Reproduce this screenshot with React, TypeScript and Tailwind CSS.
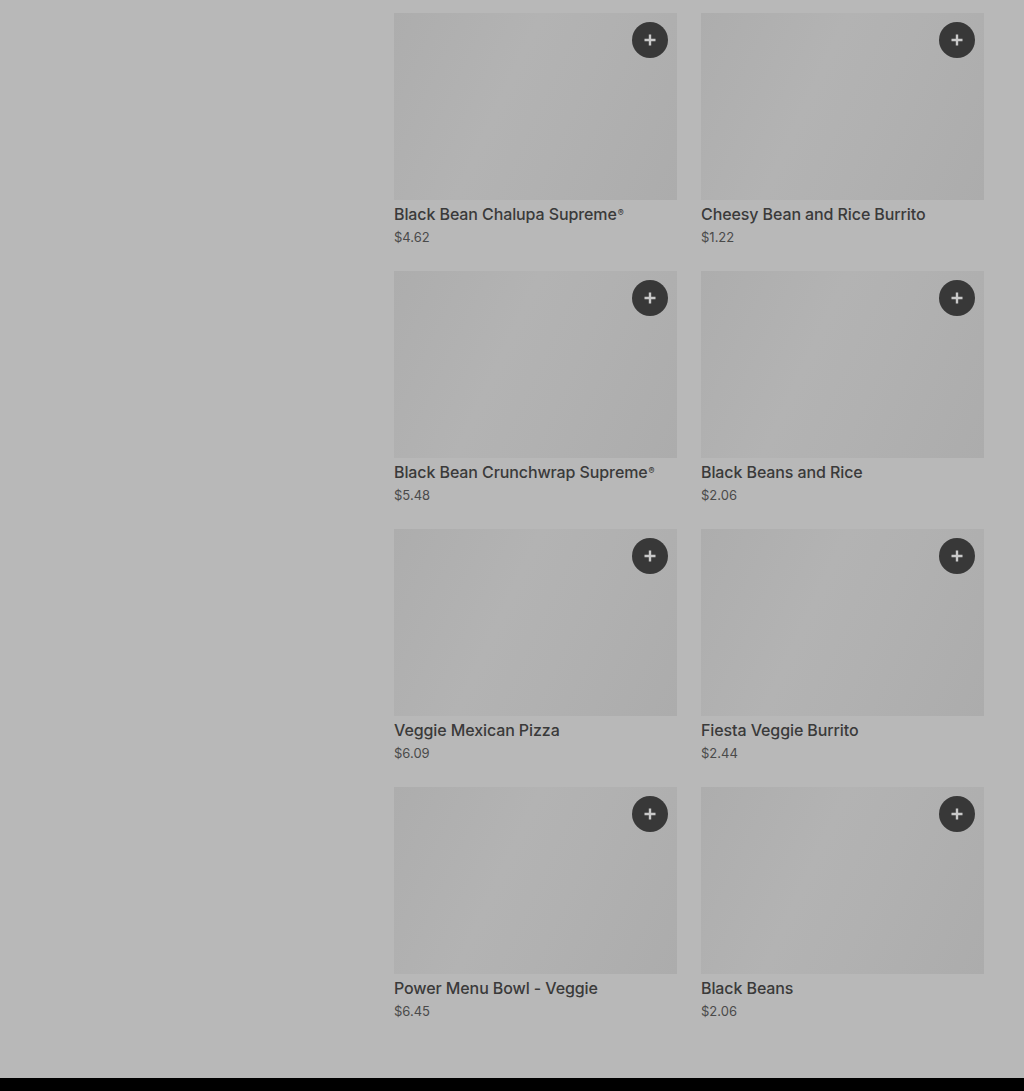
import * as React from 'react';

type Item = { name: string; price: string; reg?: boolean };

const items: Item[] = [
  { name: 'Black Bean Chalupa Supreme', price: '$4.62', reg: true },
  { name: 'Cheesy Bean and Rice Burrito', price: '$1.22' },
  { name: 'Black Bean Crunchwrap Supreme', price: '$5.48', reg: true },
  { name: 'Black Beans and Rice', price: '$2.06' },
  { name: 'Veggie Mexican Pizza', price: '$6.09' },
  { name: 'Fiesta Veggie Burrito', price: '$2.44' },
  { name: 'Power Menu Bowl - Veggie', price: '$6.45' },
  { name: 'Black Beans', price: '$2.06' },
];

function PlusButton() {
  return (
    <button className="absolute top-[9px] right-[9px] flex h-9 w-9 items-center justify-center rounded-full bg-[#383838]">
      <svg width="14" height="14" viewBox="0 0 14 14" fill="none">
        <path d="M7 1.5v11M1.5 7h11" stroke="#c9c9c9" strokeWidth="2.4" />
      </svg>
    </button>
  );
}

function MenuCard({ item }: { item: Item }) {
  return (
    <div className="flex flex-col">
      <div className="relative h-[187px] w-full bg-[linear-gradient(115deg,#adadad_0%,#b3b3b3_40%,#b1b1b1_60%,#acacac_100%)]">
        <PlusButton />
      </div>
      <p className="mt-[2px] text-[16px] leading-6 font-medium tracking-[-0.1px] text-[#3a3a3a]">
        {item.name}
        {item.reg && <sup className="ml-[1px] text-[9px]">®</sup>}
      </p>
      <p className="mt-px text-[13px] leading-5 text-[#4a4a4a]">{item.price}</p>
    </div>
  );
}

export default function App() {
  return (
    <div className="flex min-h-[1091px] flex-col bg-[#b8b8b8] font-['Inter','Liberation_Sans',sans-serif]">
      <div className="flex flex-1 justify-end pr-10 pt-[13px]">
        <div className="grid grid-cols-[283px_283px] gap-x-6 gap-y-[24px]">
          {items.map(item => (
            <MenuCard key={item.name} item={item} />
          ))}
        </div>
      </div>
      <div className="mt-[57px] h-[14px] bg-black" />
    </div>
  );
}
